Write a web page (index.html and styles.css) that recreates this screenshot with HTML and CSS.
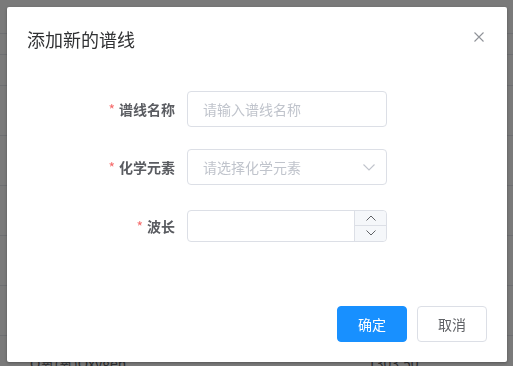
FILE: index.html
```html
<!DOCTYPE html>
<html lang="zh-CN">
<head>
    <meta charset="UTF-8">
    <meta name="viewport" content="width=device-width, initial-scale=1.0">
    <title>添加新的谱线</title>
    <link rel="stylesheet" href="styles.css">
</head>
<body>
    <div class="page">
        <div class="bar bar-top"></div>
        <div class="bar bar-sub"></div>
        <div class="bar bar-head"></div>
        <div class="row"></div>
        <div class="row"></div>
        <div class="row"></div>
        <div class="row"></div>
        <div class="row"></div>
        <div class="row row-last">
            <span class="cell cell-name">O氧(氧)Oxygen</span>
            <span class="cell cell-num">1303.50</span>
        </div>
    </div>

    <div class="overlay"></div>

    <div class="dialog">
        <div class="dialog-header">
            <span class="dialog-title">添加新的谱线</span>
            <button class="dialog-close" type="button">
                <svg width="10" height="10" viewBox="0 0 10 10">
                    <path d="M0.5 0.5 L9.5 9.5 M9.5 0.5 L0.5 9.5" stroke="#909399" stroke-width="1.1" fill="none"/>
                </svg>
            </button>
        </div>
        <div class="dialog-body">
            <form class="form">
                <div class="form-item">
                    <label class="form-label"><span class="req">*</span>谱线名称</label>
                    <div class="form-content">
                        <input class="input" type="text" placeholder="请输入谱线名称">
                    </div>
                </div>
                <div class="form-item">
                    <label class="form-label"><span class="req">*</span>化学元素</label>
                    <div class="form-content">
                        <div class="select">
                            <input class="input" type="text" placeholder="请选择化学元素" readonly>
                            <svg class="select-arrow" width="12" height="7" viewBox="0 0 12 7">
                                <path d="M0.5 0.5 L6 6 L11.5 0.5" stroke="#c0c4cc" stroke-width="1.1" fill="none"/>
                            </svg>
                        </div>
                    </div>
                </div>
                <div class="form-item form-item-num">
                    <label class="form-label"><span class="req">*</span>波长</label>
                    <div class="form-content">
                        <div class="number">
                            <input class="input input-num" type="text">
                            <div class="spin">
                                <span class="spin-btn spin-up">
                                    <svg width="10" height="6" viewBox="0 0 10 6">
                                        <path d="M0.5 5.5 L5 1 L9.5 5.5" stroke="#606266" stroke-width="1" fill="none"/>
                                    </svg>
                                </span>
                                <span class="spin-btn">
                                    <svg width="10" height="6" viewBox="0 0 10 6">
                                        <path d="M0.5 0.5 L5 5 L9.5 0.5" stroke="#606266" stroke-width="1" fill="none"/>
                                    </svg>
                                </span>
                            </div>
                        </div>
                    </div>
                </div>
            </form>
        </div>
        <div class="dialog-footer">
            <button class="btn btn-primary" type="button">确定</button>
            <button class="btn" type="button">取消</button>
        </div>
    </div>
</body>
</html>
```

FILE: styles.css
```css
* {
    box-sizing: border-box;
}

body {
    margin: 0;
    font-family: "Noto Sans CJK SC", "Noto Sans", sans-serif;
    background-color: #fff;
    color: #606266;
    overflow: hidden;
    height: 366px;
}

/* page underneath the mask */
.page {
    width: 513px;
    height: 366px;
    overflow: hidden;
}

.bar,
.row {
    border-bottom: 1px solid #e6e8ee;
}

.bar-top {
    height: 34px;
}

.bar-sub {
    height: 21px;
}

.bar-head {
    height: 31px;
}

.row {
    height: 50px;
    display: flex;
    align-items: center;
    font-size: 14px;
}

.row-last {
    height: 30px;
    align-items: flex-end;
    border-bottom: none;
}

.cell {
    line-height: 14px;
    margin-bottom: -4px;
}

.cell-name {
    margin-left: 30px;
    width: 338px;
}

.overlay {
    position: fixed;
    inset: 0;
    background-color: rgba(0, 0, 0, 0.52);
}

/* dialog */
.dialog {
    position: absolute;
    left: 7px;
    top: 7px;
    width: 500px;
    background-color: #fff;
    border-radius: 2px;
    box-shadow: 0 1px 3px rgba(0, 0, 0, 0.3);
}

.dialog-header {
    padding: 20px 20px 10px;
    position: relative;
}

.dialog-title {
    display: block;
    font-size: 18px;
    line-height: 24px;
    color: #303133;
}

.dialog-close {
    position: absolute;
    top: 25px;
    right: 23px;
    padding: 0;
    border: none;
    background: none;
    width: 10px;
    height: 10px;
    display: flex;
}

.dialog-body {
    padding: 30px 20px;
}

.form-item {
    display: flex;
    align-items: center;
    height: 36px;
    margin-bottom: 22px;
}

.form-item-num {
    height: 37px;
}

.form-label {
    width: 160px;
    padding-right: 12px;
    text-align: right;
    font-size: 14px;
    font-weight: 700;
    color: #5a5c61;
    line-height: 36px;
}

.req {
    color: #f56c6c;
    margin-right: 4px;
    font-weight: 400;
}

.form-content {
    width: 200px;
}

.input {
    display: block;
    width: 200px;
    height: 36px;
    padding: 0 15px;
    border: 1px solid #dcdfe6;
    border-radius: 4px;
    font-family: inherit;
    font-size: 14px;
    color: #606266;
    background-color: #fff;
    outline: none;
}

.input::placeholder {
    color: #c0c4cc;
}

.select {
    position: relative;
}

.select-arrow {
    position: absolute;
    right: 12px;
    top: 15px;
}

.number {
    position: relative;
    width: 200px;
}

.input-num {
    height: 32px;
    padding-right: 50px;
}

.spin {
    position: absolute;
    top: 1px;
    right: 1px;
    bottom: 1px;
    width: 32px;
    display: flex;
    flex-direction: column;
    border-left: 1px solid #dcdfe6;
    border-radius: 0 4px 4px 0;
    background-color: #f5f7fa;
    overflow: hidden;
}

.spin-btn {
    flex: 1;
    display: flex;
    align-items: center;
    justify-content: center;
}

.spin-up {
    border-bottom: 1px solid #dcdfe6;
}

.dialog-footer {
    padding: 10px 20px 20px;
    display: flex;
    justify-content: flex-end;
    gap: 10px;
}

.btn {
    width: 70px;
    height: 36px;
    border: 1px solid #dcdfe6;
    border-radius: 4px;
    background-color: #fff;
    color: #606266;
    font-family: inherit;
    font-size: 14px;
    padding: 0;
    cursor: pointer;
}

.btn-primary {
    background-color: #1890ff;
    border-color: #1890ff;
    color: #fff;
}
```
